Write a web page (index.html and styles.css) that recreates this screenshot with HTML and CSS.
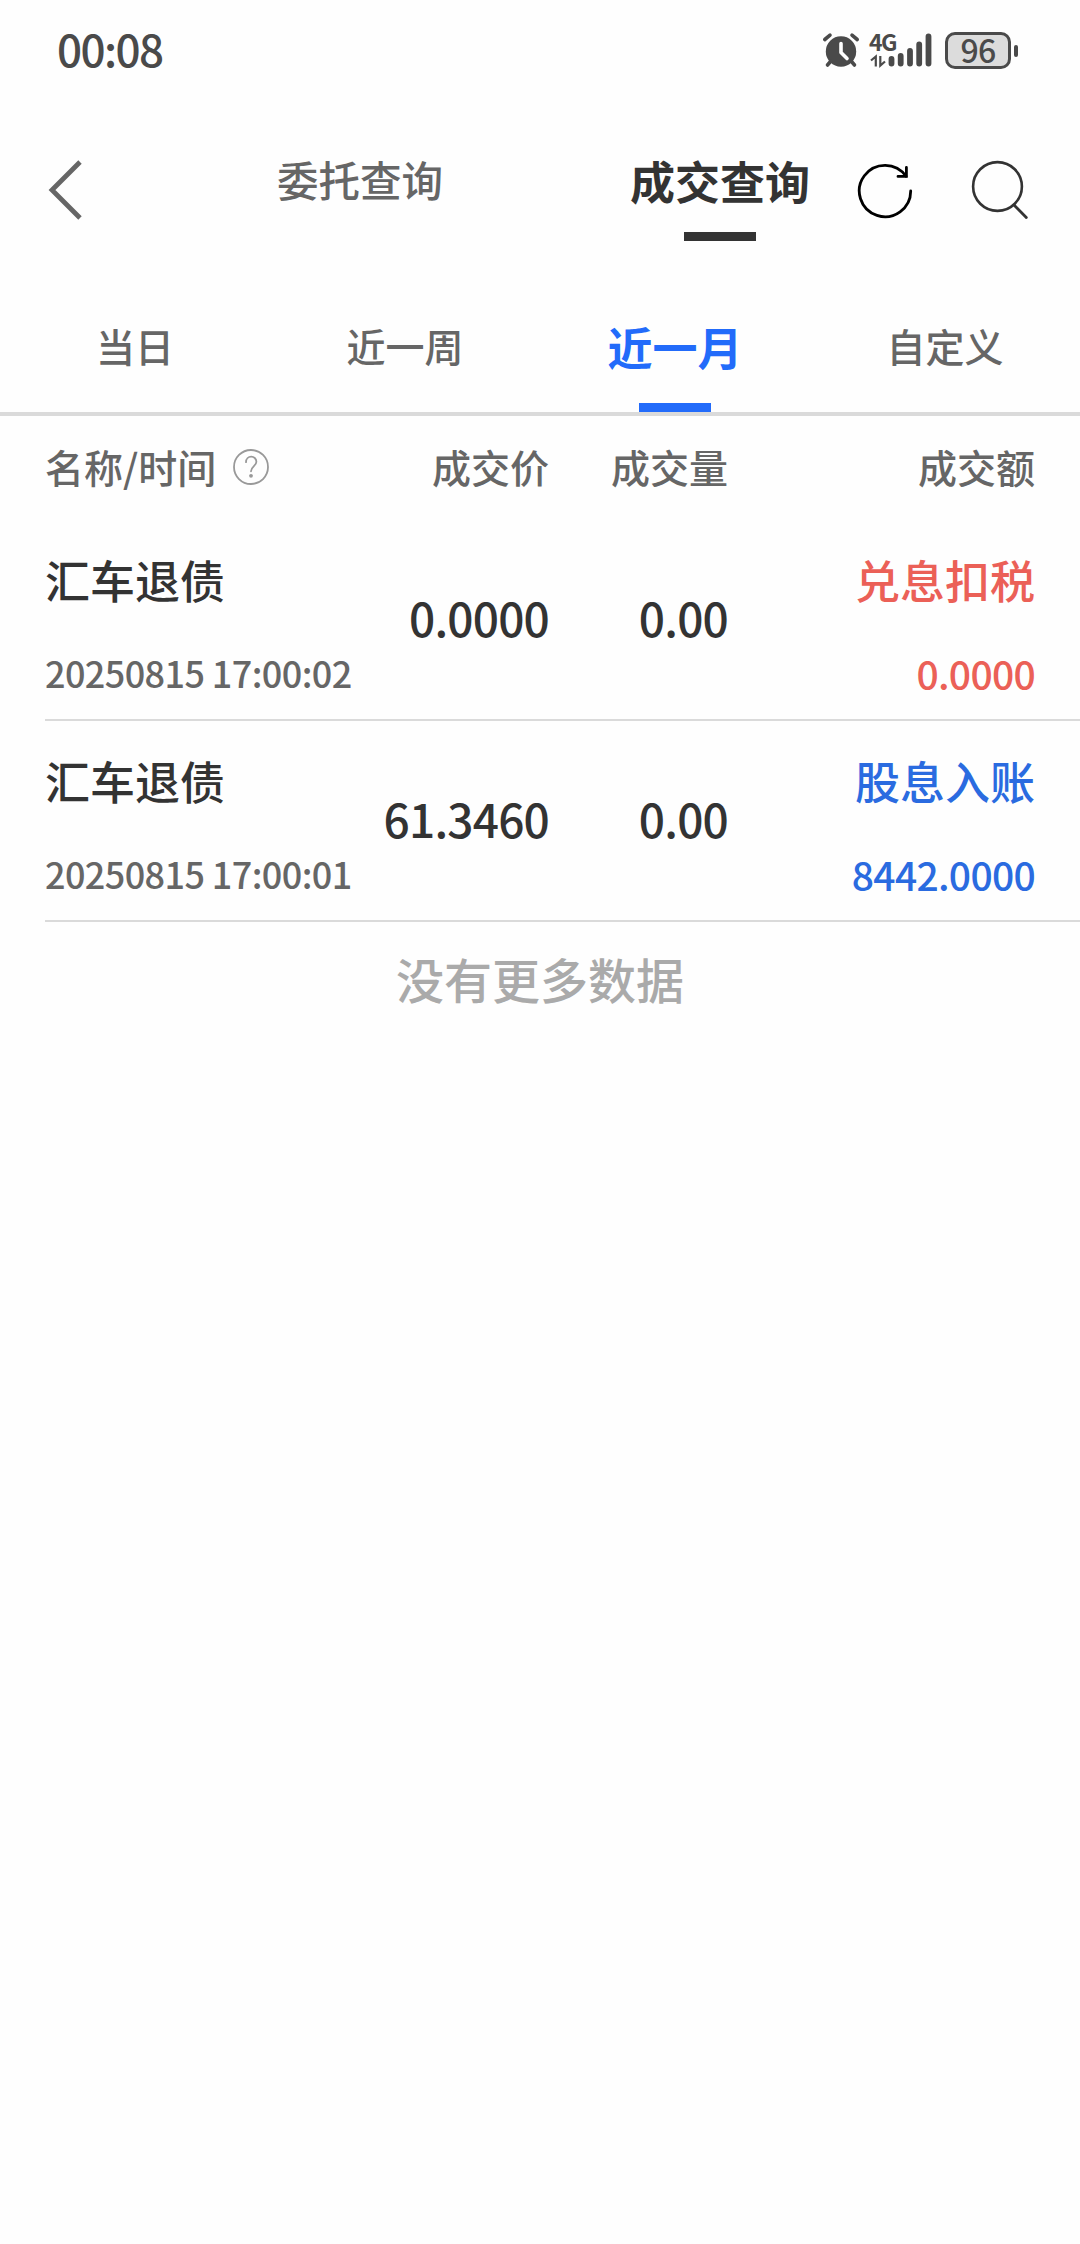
FILE: index.html
```html
<!DOCTYPE html>
<html lang="zh-CN">
<head>
    <meta charset="UTF-8">
    <meta name="viewport" content="width=device-width, initial-scale=1.0">
    <title>成交查询</title>
    <link rel="stylesheet" href="styles.css">
</head>

<body>

    <div class="status-bar">
        <span class="clock">00:08</span>
        <div class="status-icons">
            <svg class="alarm" width="38" height="36" viewBox="0 0 38 36">
                <circle cx="19" cy="19.5" r="15.2" fill="#4a4a4a"/>
                <path d="M2.8 7.5L8 3.2M35.2 7.5L30 3.2M8.5 29.5L5.5 33M29.5 29.5L32.5 33" stroke="#4a4a4a" stroke-width="3.6" stroke-linecap="round"/>
                <path d="M19 11.5V20.5L25 26.5" fill="none" stroke="#fefefe" stroke-width="3.6" stroke-linecap="round" stroke-linejoin="round"/>
            </svg>
            <div class="network">
                <span class="network-type">4G</span>
                <svg width="64" height="36" viewBox="0 0 64 36">
                    <path d="M2 28.5L6.8 24.5V34.5M11.3 24V33.5L16 29.5" fill="none" stroke="#4a4a4a" stroke-width="2.2"/>
                    <path d="M22.5 27V31.5M31.7 24V31.5M41 19V31.5M50.2 12.5V31.5M59.5 4.5V31.5" stroke="#4a4a4a" stroke-width="5.8" stroke-linecap="round"/>
                </svg>
            </div>
            <div class="battery">96</div>
            <div class="battery-tip"></div>
        </div>
    </div>

    <header class="title-bar">
        <a href="#" class="back">
            <svg width="36" height="60" viewBox="0 0 36 60">
                <path d="M32 2L4 30L32 58" fill="none" stroke="#666" stroke-width="4.8"/>
            </svg>
        </a>
        <nav class="title-tabs">
            <a href="#">委托查询</a>
            <a href="#" class="active">成交查询</a>
        </nav>
        <div class="actions">
            <svg class="refresh" width="58" height="58" viewBox="0 0 58 58">
                <path d="M54.7 29A25.7 25.7 0 1 1 50 14.2" fill="none" stroke="#000" stroke-width="2.8" stroke-linecap="round"/>
                <path d="M42 14.4H50.4V5.5" fill="none" stroke="#000" stroke-width="2.8" stroke-linecap="round"/>
            </svg>
            <svg width="58" height="60" viewBox="0 0 58 60">
                <circle cx="26.5" cy="26.5" r="24.4" fill="none" stroke="#333" stroke-width="2.6"/>
                <path d="M43 45L55.3 57.5" stroke="#333" stroke-width="2.8" stroke-linecap="round"/>
            </svg>
        </div>
    </header>

    <nav class="range-tabs">
        <a href="#">当日</a>
        <a href="#">近一周</a>
        <a href="#" class="active">近一月</a>
        <a href="#">自定义</a>
    </nav>

    <div class="columns table-head">
        <div class="name-head">
            名称/时间
            <svg width="38" height="38" viewBox="0 0 38 38">
                <circle cx="19" cy="19" r="17" fill="none" stroke="#999" stroke-width="1.8"/>
                <path d="M14 14.2C14 6.8 24.4 7 24.4 13.8C24.4 17.8 19 18.5 19 23.3" fill="none" stroke="#999" stroke-width="1.8" stroke-linecap="round"/>
                <circle cx="19" cy="27.8" r="1.9" fill="#999"/>
            </svg>
        </div>
        <div>成交价</div>
        <div>成交量</div>
        <div>成交额</div>
    </div>

    <div class="list">
        <div class="columns row">
            <div class="name">
                <p>汇车退债</p>
                <p class="time">20250815 17:00:02</p>
            </div>
            <div class="number">0.0000</div>
            <div class="number">0.00</div>
            <div class="amount red">
                <p>兑息扣税</p>
                <p class="sum">0.0000</p>
            </div>
        </div>
        <div class="columns row">
            <div class="name">
                <p>汇车退债</p>
                <p class="time">20250815 17:00:01</p>
            </div>
            <div class="number">61.3460</div>
            <div class="number">0.00</div>
            <div class="amount blue">
                <p>股息入账</p>
                <p class="sum">8442.0000</p>
            </div>
        </div>
    </div>

    <p class="no-more">没有更多数据</p>

</body>
</html>
```
FILE: styles.css
```css
* {
    box-sizing: border-box;
}

body {
    margin: 0;
    min-height: 100vh;
    background-color: #fefefe;
    color: #333;
    font-family: "Noto Sans CJK SC", sans-serif;
    font-weight: 500;
}

p {
    margin: 0;
}

a {
    color: inherit;
    text-decoration: none;
}

svg {
    display: block;
    flex-shrink: 0;
}

/* Статусная строка */
.status-bar {
    display: flex;
    justify-content: space-between;
    height: 102px;
    padding: 0 62px 0 57px;
    color: #4a4a4a;
}

.clock {
    font-size: 44px;
    line-height: 97px;
    letter-spacing: -1.6px;
}

.status-icons {
    display: flex;
    align-items: flex-start;
    padding-top: 32px;
}

.network {
    position: relative;
    width: 64px;
    margin-left: 9px;
}

.network-type {
    position: absolute;
    top: -3px;
    left: 0;
    font-size: 23px;
    line-height: 24px;
    font-weight: 700;
    letter-spacing: -1.5px;
}

.battery {
    width: 66px;
    height: 37px;
    margin-left: 12px;
    border: 3px solid #4a4a4a;
    border-radius: 10px;
    background-color: #dcdcdc;
    font-size: 32px;
    line-height: 29px;
    letter-spacing: -0.8px;
    text-align: center;
}

.battery-tip {
    width: 4px;
    height: 12px;
    margin: 13px 0 0 3px;
    border-radius: 2px;
    background-color: #4a4a4a;
}

/* Шапка */
.title-bar {
    display: flex;
    height: 180px;
}

.back {
    width: 180px;
    padding: 58px 0 0 48px;
}

.title-tabs {
    display: flex;
}

.title-tabs a {
    width: 360px;
    font-size: 41.5px;
    line-height: 76px;
    padding-top: 39px;
    text-align: center;
    color: #666;
}

.title-tabs .active {
    padding-top: 41px;
    font-size: 45px;
    font-weight: 700;
    color: #333;
}

.title-tabs .active::after,
.range-tabs .active::after {
    content: "";
    display: block;
    width: 72px;
    height: 9px;
    margin: 13px auto 0;
    background-color: #333;
}

.actions {
    display: flex;
    gap: 57px;
    margin-left: -44px;
    padding-top: 58px;
}

.refresh {
    margin-top: 2px;
}

/* Период */
.range-tabs {
    display: flex;
    height: 134px;
    border-bottom: 4px solid #dadada;
}

.range-tabs a {
    flex: 1;
    padding-top: 23px;
    font-size: 39px;
    line-height: 80px;
    text-align: center;
    color: #666;
}

.range-tabs .active {
    padding-top: 25px;
    font-size: 45px;
    font-weight: 700;
    color: #226bfa;
}

.range-tabs .active::after {
    margin-top: 16px;
    background-color: #226bfa;
}

/* Таблица */
.columns {
    display: grid;
    grid-template-columns: 314px 190px 179px 307px;
    align-items: start;
    text-align: right;
}

.table-head {
    height: 104px;
    padding-left: 45px;
    font-size: 39px;
    line-height: 101px;
    color: #666;
}

.name-head {
    display: flex;
    align-items: center;
    gap: 16px;
    text-align: left;
}

.list {
    padding-left: 45px;
}

.row {
    height: 201px;
    padding-top: 30px;
    border-bottom: 2px solid #dadada;
    font-size: 45px;
    line-height: 60px;
}

.name {
    text-align: left;
    white-space: nowrap;
}

.name .time {
    margin-top: 32px;
    font-size: 36px;
    letter-spacing: -0.6px;
    color: #666;
}

.number {
    padding-top: 37px;
    font-size: 46px;
    letter-spacing: -0.8px;
}

.amount .sum {
    margin-top: 33px;
    font-size: 39px;
    letter-spacing: -0.7px;
}

.red {
    color: #eb6057;
}

.blue {
    color: #2a6be0;
}

.no-more {
    font-size: 48px;
    line-height: 112px;
    text-align: center;
    color: #aaa;
}
```
